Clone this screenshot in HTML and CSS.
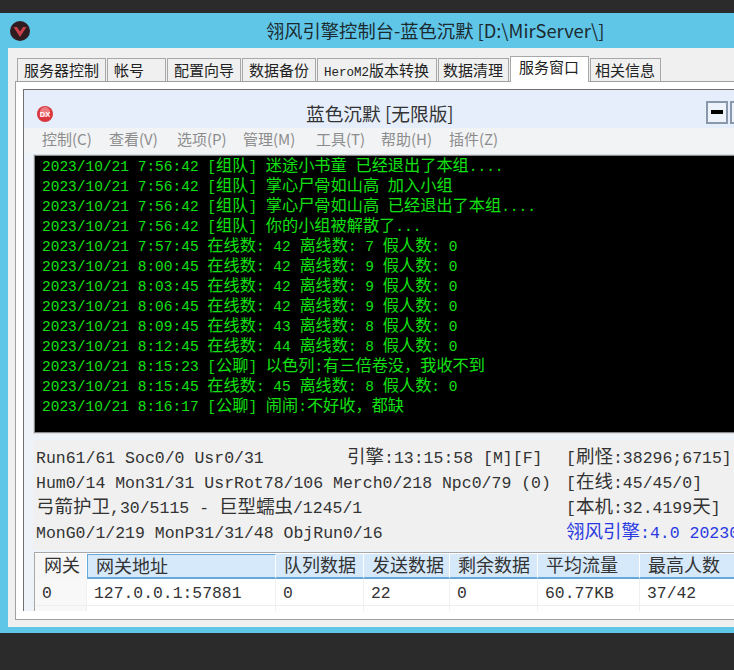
FILE: index.html
```html
<!DOCTYPE html>
<html lang="zh">
<head>
<meta charset="utf-8">
<title>翎风引擎控制台</title>
<link rel="stylesheet" href="styles.css">
</head>
<body>
<div class="topbar"></div>
<div class="app">
  <div class="apptitle">
    <svg class="logo" viewBox="0 0 20 20" width="20" height="20"><circle cx="10" cy="10" r="10" fill="#2f1c20"/><path d="M3.5 6 L7 6 L10 10.500 L13 6 L16.500 6 L10 16 Z" fill="#c8404a"/></svg>
    <div class="apptext">翎风引擎控制台-蓝色沉默 [D:\MirServer\]</div>
  </div>
  <div class="client">
    <div class="tabs">
      <div class="tab w1">服务器控制</div>
      <div class="tab w2">帐号</div>
      <div class="tab w3">配置向导</div>
      <div class="tab w3">数据备份</div>
      <div class="tab w4"><span class="hero">HeroM2</span>版本转换</div>
      <div class="tab w5">数据清理</div>
      <div class="tab active">服务窗口</div>
      <div class="tab w5">相关信息</div>
    </div>
    <div class="panel">
      <div class="child">
        <div class="childtitle">
          <svg class="dx" viewBox="0 0 18 18" width="18" height="18"><circle cx="9" cy="9" r="8" fill="#d9363e"/><circle cx="9" cy="7" r="5" fill="#ee7b80"/><text x="9" y="11.500" text-anchor="middle" class="dxt">DX</text></svg>
          <div class="childtext">蓝色沉默 [无限版]</div>
          <div class="winbtn"><span class="minbar"></span></div>
          <div class="winbtn"></div>
        </div>
        <div class="menu">
          <span class="m1">控制(C)</span>
          <span class="m2">查看(V)</span>
          <span class="m3">选项(P)</span>
          <span class="m4">管理(M)</span>
          <span class="m5">工具(T)</span>
          <span class="m6">帮助(H)</span>
          <span class="m7">插件(Z)</span>
        </div>
        <div class="log">
          <div class="ln">2023/10/21 7:56:42 [<span class="z">组队</span>] <span class="z">迷途小书童</span> <span class="z">已经退出了本组</span>....</div>
          <div class="ln">2023/10/21 7:56:42 [<span class="z">组队</span>] <span class="z">掌心尸骨如山高</span> <span class="z">加入小组</span></div>
          <div class="ln">2023/10/21 7:56:42 [<span class="z">组队</span>] <span class="z">掌心尸骨如山高</span> <span class="z">已经退出了本组</span>....</div>
          <div class="ln">2023/10/21 7:56:42 [<span class="z">组队</span>] <span class="z">你的小组被解散了</span>...</div>
          <div class="ln">2023/10/21 7:57:45 <span class="z">在线数</span>: 42 <span class="z">离线数</span>: 7 <span class="z">假人数</span>: 0</div>
          <div class="ln">2023/10/21 8:00:45 <span class="z">在线数</span>: 42 <span class="z">离线数</span>: 9 <span class="z">假人数</span>: 0</div>
          <div class="ln">2023/10/21 8:03:45 <span class="z">在线数</span>: 42 <span class="z">离线数</span>: 9 <span class="z">假人数</span>: 0</div>
          <div class="ln">2023/10/21 8:06:45 <span class="z">在线数</span>: 42 <span class="z">离线数</span>: 9 <span class="z">假人数</span>: 0</div>
          <div class="ln">2023/10/21 8:09:45 <span class="z">在线数</span>: 43 <span class="z">离线数</span>: 8 <span class="z">假人数</span>: 0</div>
          <div class="ln">2023/10/21 8:12:45 <span class="z">在线数</span>: 44 <span class="z">离线数</span>: 8 <span class="z">假人数</span>: 0</div>
          <div class="ln">2023/10/21 8:15:23 [<span class="z">公聊</span>] <span class="z">以色列</span>:<span class="z">有三倍卷没，我收不到</span></div>
          <div class="ln">2023/10/21 8:15:45 <span class="z">在线数</span>: 45 <span class="z">离线数</span>: 8 <span class="z">假人数</span>: 0</div>
          <div class="ln">2023/10/21 8:16:17 [<span class="z">公聊</span>] <span class="z">闹闹</span>:<span class="z">不好收，都缺</span></div>
        </div>
        <div class="stats">
          <div>Run61/61 Soc0/0 Usr0/31</div>
          <div><span class="y">引擎</span>:13:15:58 [M][F]</div>
          <div>[<span class="y">刷怪</span>:38296;6715]</div>
          <div class="span2">Hum0/14 Mon31/31 UsrRot78/106 Merch0/218 Npc0/79 (0)</div>
          <div>[<span class="y">在线</span>:45/45/0]</div>
          <div class="span2"><span class="y">弓箭护卫</span>,30/5115 - <span class="y">巨型蠕虫</span>/1245/1</div>
          <div>[<span class="y">本机</span>:32.4199<span class="y">天</span>]</div>
          <div class="span2">MonG0/1/219 MonP31/31/48 ObjRun0/16</div>
          <div class="blue"><span class="y">翎风引擎</span>:4.0 20230</div>
        </div>
        <div class="grid">
          <div class="hd first">网关</div>
          <div class="hd sel">网关地址</div>
          <div class="hd">队列数据</div>
          <div class="hd">发送数据</div>
          <div class="hd">剩余数据</div>
          <div class="hd">平均流量</div>
          <div class="hd">最高人数</div>
          <div class="td firstc">0</div>
          <div class="td">127.0.0.1:57881</div>
          <div class="td">0</div>
          <div class="td">22</div>
          <div class="td">0</div>
          <div class="td">60.77KB</div>
          <div class="td">37/42</div>
          <div class="tail firstc"></div>
          <div class="tail"></div>
          <div class="tail"></div>
          <div class="tail"></div>
          <div class="tail"></div>
          <div class="tail"></div>
          <div class="tail"></div>
        </div>
      </div>
    </div>
  </div>
  <div class="appfoot"></div>
</div>
<div class="bottombar"></div>
</body>
</html>
```

FILE: styles.css
```css
* { box-sizing: border-box; }
html, body { margin: 0; padding: 0; }
body {
  width: 734px;
  height: 670px;
  overflow: hidden;
  background: #2b2b2b;
  font-family: "Noto Sans CJK SC", sans-serif;
  color: #222;
  display: flex;
  flex-direction: column;
}
.topbar { height: 13px; background: #2b2b2b; flex: none; }
.bottombar { height: 37px; background: #2b2b2b; flex: none; }
.app { height: 620px; background: #5fc6e8; flex: none; display: flex; flex-direction: column; }
.apptitle { height: 35px; display: flex; align-items: center; padding-left: 10px; flex: none; }
.logo { flex: none; margin-top: 1px; }
.apptext { margin-left: 236px; font-size: 18.300px; line-height: 35px; color: #1c2a30; white-space: nowrap; }
.client { height: 579px; margin-left: 8px; background: #f0f0f0; padding-top: 10px; flex: none; overflow: hidden; }
.appfoot { height: 6px; flex: none; }

.tabs { height: 23px; display: flex; padding-left: 9px; align-items: flex-end; }
.tab {
  height: 23px; flex: none;
  background: #f0f0f0;
  border: 1px solid #a8a8a8; border-bottom: 0;
  margin-right: 1px;
  padding-left: 6px;
  font-size: 15px; line-height: 21px; color: #222; white-space: nowrap;
}
.w1 { width: 89px; }
.w2 { width: 59px; }
.w3 { width: 74px; }
.w4 { width: 120px; }
.w5 { width: 71px; padding-left: 4px; }
.hero { font-family: "Liberation Mono", monospace; font-size: 12.500px; }
.tab.active { width: 79px; height: 26px; background: #fff; margin-bottom: -1px; position: relative; z-index: 1; line-height: 20px; padding-left: 8px; }

.panel { height: 539px; margin-left: 7px; background: #fff; border: 1px solid #a0a0a0; border-right: 0; padding: 7px 0 8px 7px; }
.child { height: 522px; width: 720px; overflow: hidden; background: #eef2f9; border-left: 1px solid #707070; border-top: 1px solid #707070; }
.childtitle { height: 38px; background: #e6eefb; display: flex; align-items: center; padding: 6px 0 0 12px; }
.dx { flex: none; margin-top: 4px; }
.dxt { font-family: "Liberation Sans", sans-serif; font-size: 7.500px; font-weight: 700; fill: #fff; }
.childtext { margin-left: 252px; width: 400px; font-size: 18.700px; color: #333; white-space: nowrap; flex: none; }
.winbtn { width: 22px; height: 23px; border: 2px solid #8a98ac; background: #eef3fb; margin-right: 2px; display: flex; align-items: center; justify-content: center; flex: none; }
.minbar { width: 12px; height: 4px; background: #000; }

.menu { height: 25px; background: #f2f3f5; display: flex; align-items: flex-start; font-size: 15px; line-height: 22px; color: #8c8c8c; padding-left: 18px; white-space: nowrap; }
.menu span { flex: none; }
.m1 { width: 67px; }
.m2 { width: 68px; }
.m3 { width: 66px; }
.m4 { width: 73px; }
.m5 { width: 65px; }
.m6 { width: 68px; }

.log {
  margin-left: 10px; margin-top: 2px; height: 278px; background: #000;
  border: 1px solid #8a8a8a; border-right: 0; outline: 1px solid #d8dce2;
  padding: 0 0 0 7px;
  color: #12e012;
  font-family: "Liberation Mono", "Noto Sans CJK SC", monospace;
  font-size: 14.500px; overflow: hidden;
}
.ln { height: 20px; line-height: 15px; white-space: pre; }
.z { font-family: "Noto Sans CJK SC", sans-serif; font-size: 16.200px; line-height: 1; }

.stats {
  margin-top: 7px; margin-left: 9px; height: 110px; background: #f0f0f0;
  padding: 6px 0 0 3px;
  display: grid; grid-template-columns: 311px 219px 180px; grid-auto-rows: 25px;
  font-family: "Liberation Mono", "Noto Sans CJK SC", monospace;
  font-size: 16.500px; line-height: 25px; color: #333;
}
.stats div { white-space: pre; overflow: visible; }
.span2 { grid-column: span 2; }
.y { font-family: "Noto Sans CJK SC", sans-serif; font-size: 18.500px; line-height: 1; }
.stats .blue { color: #2a3ae0; }

.grid {
  margin-left: 10px; margin-top: 2px;
  display: grid; grid-template-columns: 52px 189px 88px 86px 88px 102px 100px; grid-template-rows: 25px 27px 10px;
  border-top: 1px solid #a8a8a8; border-left: 1px solid #a8a8a8;
  background: #fff; padding-top: 1px;
  width: 705px; white-space: nowrap;
}
.hd { background: #d6e9fb; border-bottom: 2px solid #64a8dc; border-right: 1px solid #fff; font-size: 18px; line-height: 21px; padding-left: 8px; color: #333; }
.hd.first { background: #f6f6f6; border-bottom: 0; padding-left: 9px; }
.hd.sel { border-left: 1px solid #64a8dc; border-top: 1px solid #64a8dc; line-height: 20px; }
.td { border-right: 1px solid #f0f0f0; border-bottom: 1px solid #eee; font-family: "Liberation Mono", monospace; font-size: 16.400px; line-height: 29px; padding-left: 7px; color: #333; white-space: pre; }
.tail { border-right: 1px solid #f0f0f0; }
.firstc { background: #f8f8f8; padding-left: 7px; }
```
